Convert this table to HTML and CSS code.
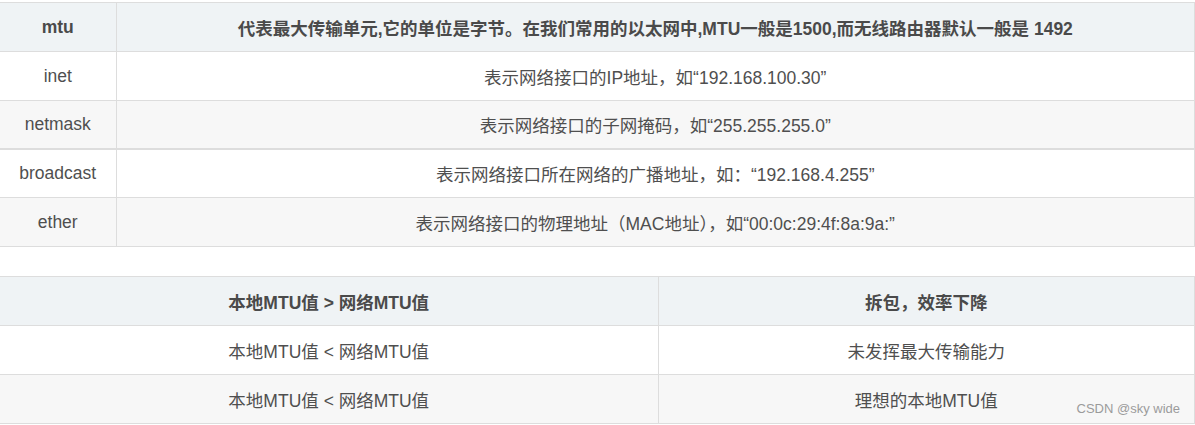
FILE: index.html
```html
<!DOCTYPE html>
<html lang="zh">
<head>
<meta charset="utf-8">
<title>MTU</title>
<link rel="stylesheet" href="styles.css">
</head>
<body>
<div class="page">
  <table class="grid grid-one">
    <colgroup><col class="c-key"><col></colgroup>
    <thead>
      <tr><th>mtu</th><th>代表最大传输单元,它的单位是字节。在我们常用的以太网中,MTU一般是1500,而无线路由器默认一般是 1492</th></tr>
    </thead>
    <tbody>
      <tr><td>inet</td><td>表示网络接口的IP地址，如“192.168.100.30”</td></tr>
      <tr class="split"><td>netmask</td><td>表示网络接口的子网掩码，如“255.255.255.0”</td></tr>
      <tr class="short"><td>broadcast</td><td>表示网络接口所在网络的广播地址，如：“192.168.4.255”</td></tr>
      <tr><td>ether</td><td>表示网络接口的物理地址（MAC地址），如“00:0c:29:4f:8a:9a:”</td></tr>
    </tbody>
  </table>

  <table class="grid grid-two">
    <colgroup><col class="c-half"><col></colgroup>
    <thead>
      <tr><th>本地MTU值 &gt; 网络MTU值</th><th>拆包，效率下降</th></tr>
    </thead>
    <tbody>
      <tr><td>本地MTU值 &lt; 网络MTU值</td><td>未发挥最大传输能力</td></tr>
      <tr><td>本地MTU值 &lt; 网络MTU值</td><td>理想的本地MTU值</td></tr>
    </tbody>
  </table>
  <div class="mark">CSDN @sky wide</div>
</div>
</body>
</html>
```

FILE: styles.css
```css
html, body {
  margin: 0;
  padding: 0;
  background: #ffffff;
}

.page {
  position: relative;
  width: 1195px;
  height: 425px;
  padding-top: 2px;
  box-sizing: border-box;
  font-family: "Liberation Sans", "Noto Sans CJK SC", sans-serif;
  font-size: 17.5px;
  color: #4f4f4f;
  overflow: hidden;
}

.grid {
  width: 1195px;
  border-collapse: collapse;
  table-layout: fixed;
}

.grid-two {
  margin-top: 29px;
}

.c-key {
  width: 116px;
}

.c-half {
  width: 658px;
}

.grid th,
.grid td {
  border: 1px solid #dddddd;
  height: 48px;
  padding: 0 8px;
  text-align: center;
  vertical-align: middle;
  white-space: nowrap;
}

.grid th:first-child,
.grid td:first-child {
  border-left: none;
}

.grid th {
  background: #eff3f5;
  font-weight: bold;
  color: #4a4a4a;
}

.grid tbody tr:nth-child(even) td {
  background: #f7f7f7;
}

.grid tr.split td {
  border-bottom-width: 2px;
  height: 47px;
}

.grid tr.short td {
  height: 47px;
}

.mark {
  position: absolute;
  right: 15px;
  bottom: 9px;
  font-size: 13px;
  color: #9b9b9b;
  font-family: "Liberation Sans", sans-serif;
}
```
